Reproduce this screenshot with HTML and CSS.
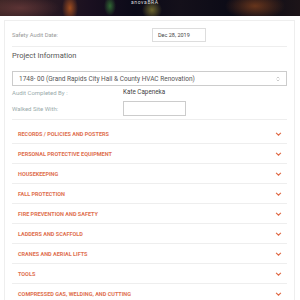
FILE: index.html
```html
<!DOCTYPE html>
<html lang="en">
<head>
  <meta charset="UTF-8">
  <title>Safety Audit</title>
  <meta name="viewport" content="width=device-width, initial-scale=1.0">
  <link rel="stylesheet" href="styles.css">
</head>
<body>
  <div class="hero"><span class="hero-text">anovaBRA</span></div>

  <div class="card">
    <div class="row date-row">
      <label class="label">Safety Audit Date:</label>
      <div class="date-box">Dec 28, 2019</div>
    </div>

    <h2 class="section-title">Project Information</h2>
    <div class="select">
      <span>1748- 00 (Grand Rapids City Hall &amp; County HVAC Renovation)</span>
      <svg class="updown" viewBox="0 0 6 8" width="4" height="6"><path d="M1 3 L3 1 L5 3 M1 5 L3 7 L5 5" fill="none" stroke="#aaa" stroke-width="0.9"/></svg>
    </div>

    <div class="info-row">
      <span class="label small">Audit Completed By :</span>
      <span class="value">Kate Capeneka</span>
    </div>
    <div class="info-row walked">
      <span class="label small">Walked Site With:</span>
      <div class="text-box"></div>
    </div>

    <div class="accordion">
      <div class="acc-item"><span>Records / Policies and Posters</span><svg class="chev" viewBox="0 0 8 5" width="7" height="4"><path d="M1 1 L4 4 L7 1" fill="none" stroke="#e06a45" stroke-width="1.4"/></svg></div>
      <div class="acc-item"><span>Personal Protective Equipment</span><svg class="chev" viewBox="0 0 8 5" width="7" height="4"><path d="M1 1 L4 4 L7 1" fill="none" stroke="#e06a45" stroke-width="1.4"/></svg></div>
      <div class="acc-item"><span>Housekeeping</span><svg class="chev" viewBox="0 0 8 5" width="7" height="4"><path d="M1 1 L4 4 L7 1" fill="none" stroke="#e06a45" stroke-width="1.4"/></svg></div>
      <div class="acc-item"><span>Fall Protection</span><svg class="chev" viewBox="0 0 8 5" width="7" height="4"><path d="M1 1 L4 4 L7 1" fill="none" stroke="#e06a45" stroke-width="1.4"/></svg></div>
      <div class="acc-item"><span>Fire Prevention and Safety</span><svg class="chev" viewBox="0 0 8 5" width="7" height="4"><path d="M1 1 L4 4 L7 1" fill="none" stroke="#e06a45" stroke-width="1.4"/></svg></div>
      <div class="acc-item"><span>Ladders and Scaffold</span><svg class="chev" viewBox="0 0 8 5" width="7" height="4"><path d="M1 1 L4 4 L7 1" fill="none" stroke="#e06a45" stroke-width="1.4"/></svg></div>
      <div class="acc-item"><span>Cranes and Aerial Lifts</span><svg class="chev" viewBox="0 0 8 5" width="7" height="4"><path d="M1 1 L4 4 L7 1" fill="none" stroke="#e06a45" stroke-width="1.4"/></svg></div>
      <div class="acc-item"><span>Tools</span><svg class="chev" viewBox="0 0 8 5" width="7" height="4"><path d="M1 1 L4 4 L7 1" fill="none" stroke="#e06a45" stroke-width="1.4"/></svg></div>
      <div class="acc-item"><span>Compressed Gas, Welding, and Cutting</span><svg class="chev" viewBox="0 0 8 5" width="7" height="4"><path d="M1 1 L4 4 L7 1" fill="none" stroke="#e06a45" stroke-width="1.4"/></svg></div>
    </div>
  </div>
</body>
</html>
```

FILE: styles.css
```css
body { margin: 0; background: #fff; font-family: Roboto, "Liberation Sans", sans-serif; color: #444; overflow: hidden; }

.hero { height: 16px; position: relative; overflow: hidden;
  background:
    radial-gradient(ellipse 8px 14px at 70px 8px, rgba(190,90,30,0.8), transparent),
    radial-gradient(ellipse 6px 10px at 110px 6px, rgba(60,140,60,0.7), transparent),
    radial-gradient(ellipse 10px 10px at 152px 10px, rgba(170,160,60,0.6), transparent),
    radial-gradient(ellipse 30px 14px at 255px 6px, rgba(140,70,30,0.7), transparent),
    radial-gradient(ellipse 40px 12px at 20px 8px, rgba(110,60,60,0.7), transparent),
    linear-gradient(90deg, #3a2424 0%, #1a1020 30%, #0b0a18 45%, #14101a 60%, #0a0a16 80%, #1c1418 100%);
}
.hero-text { position: absolute; left: 131px; top: -1px; font-size: 5px; line-height: 6px; color: #ddd; letter-spacing: 0.6px; }

.card { margin: 4px 5px 0 4px; border: 1px solid #eee; border-bottom: none; padding: 7px 7px 0 7px; }

.row { display: flex; align-items: center; }
.date-row { height: 14px; padding-bottom: 4px; border-bottom: 1px solid #eee; }
.label { font-size: 5.8px; color: #999; width: 140px; }
.date-box { width: 54px; height: 14px; border: 1px solid #ddd; font-size: 5.5px; color: #444; display: flex; align-items: center; padding-left: 5px; box-sizing: border-box; }

.section-title { margin: 3px 0 0 0; height: 12px; line-height: 12px; font-size: 7.5px; font-weight: 400; color: #555; }

.select { margin-top: 9px; height: 15px; border: 1px solid #ccc; display: flex; align-items: center; justify-content: space-between; padding: 0 6px; box-sizing: border-box; font-size: 6.5px; color: #555; }
.updown { margin-top: 1px; }

.info-row { display: flex; align-items: center; height: 12px; }
.info-row .label { width: 111px; }
.small { font-size: 6px; color: #9aabab; }
.value { font-size: 6.3px; color: #444; }
.walked { height: 16px; margin-top: 2px; padding-bottom: 3px; border-bottom: 1px solid #eee; }
.text-box { width: 63px; height: 15px; border: 1px solid #ccc; box-sizing: border-box; }

.accordion { margin-top: 4px; }
.acc-item { height: 19px; border-bottom: 1px solid #eee; display: flex; align-items: center; justify-content: space-between; padding: 0 5px 0 6px; font-size: 5.5px; font-weight: 700; text-transform: uppercase; color: #e07050; }
.chev { display: block; }
```
